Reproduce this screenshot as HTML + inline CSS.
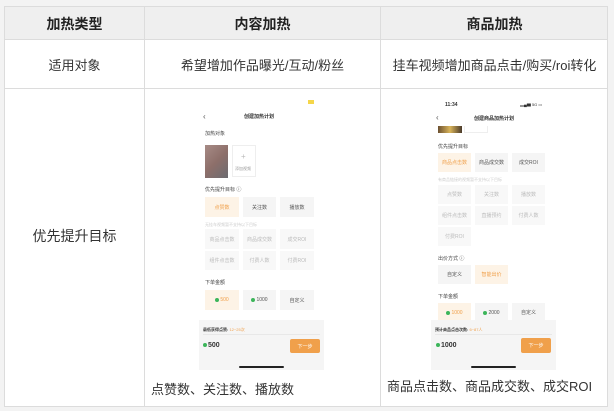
<!DOCTYPE html>
<html><head><meta charset="utf-8"><style>
*{margin:0;padding:0;box-sizing:border-box}
body{width:614px;height:411px;background:#f3f3f3;position:relative;overflow:hidden;font-family:"Liberation Sans","Noto Sans CJK SC",sans-serif;color:#333}
.a{position:absolute}
.t{position:absolute;left:4px;top:6px;width:604px;height:401px;background:#fff;border:1px solid #dcdcdc}
.hl{position:absolute;left:0;right:0;height:1px;background:#dcdcdc}
.vl{position:absolute;top:0;bottom:0;width:1px;background:#dcdcdc}
.c{position:absolute;text-align:center;white-space:nowrap}
.s{font-size:5px;white-space:nowrap;position:absolute;color:#333}
.b{position:absolute;background:#f5f5f5;font-size:5px;color:#555;display:flex;align-items:center;justify-content:center;white-space:nowrap}
.o{background:#fdf3e6;color:#f0a04b}
.f{color:#bbb;background:#f8f8f8}
.g{display:inline-block;width:4px;height:4px;border-radius:50%;background:#3cb55a;margin-right:1px}
</style></head><body>
<div class="t">
 <div class="a" style="left:0;top:0;right:0;height:33px;background:#efefef"></div>
 <div class="hl" style="top:32px"></div>
 <div class="hl" style="top:81px"></div>
 <div class="vl" style="left:139px"></div>
 <div class="vl" style="left:375px"></div>
</div>
<div class="c" style="left:5px;width:139px;top:14px;font-size:14px;font-weight:bold;color:#222">加热类型</div>
<div class="c" style="left:145px;width:235px;top:14px;font-size:14px;font-weight:bold;color:#222">内容加热</div>
<div class="c" style="left:381px;width:227px;top:14px;font-size:14px;font-weight:bold;color:#222">商品加热</div>
<div class="c" style="left:5px;width:139px;top:55px;font-size:13px">适用对象</div>
<div class="c" style="left:145px;width:235px;top:55px;font-size:13px">希望增加作品曝光/互动/粉丝</div>
<div class="c" style="left:381px;width:227px;top:55px;font-size:13px">挂车视频增加商品点击/购买/roi转化</div>
<div class="c" style="left:5px;width:139px;top:226px;font-size:14px">优先提升目标</div>
<div class="a" style="left:151px;top:379px;font-size:13px;white-space:nowrap">点赞数、关注数、播放数</div>
<div class="a" style="left:387px;top:376px;font-size:13px;white-space:nowrap">商品点击数、商品成交数、成交ROI</div>

<!-- left phone -->
<div class="a" style="left:308px;top:100px;width:6px;height:4px;background:#f5d64a;font-size:4px"></div>
<div class="s" style="left:203px;top:112px;font-size:8px;color:#555">‹</div>
<div class="s" style="left:244px;top:113px;font-weight:bold">创建加热计划</div>
<div class="s" style="left:205px;top:130px;color:#444">加热对象</div>
<div class="a" style="left:205px;top:145px;width:23px;height:33px;background:linear-gradient(135deg,#a78b86,#8d6f6a 50%,#6b6b70)"></div>
<div class="a" style="left:232px;top:145px;width:24px;height:32px;border:1px solid #eee"></div>
<div class="s" style="left:241px;top:152px;font-size:8px;color:#bbb">+</div>
<div class="s" style="left:235px;top:166px;font-size:4px;color:#999">添加视频</div>
<div class="s" style="left:205px;top:186px;color:#444">优先提升目标 ⓘ</div>
<div class="b o" style="left:205px;top:197px;width:34px;height:20px">点赞数</div>
<div class="b" style="left:243px;top:197px;width:33px;height:20px">关注数</div>
<div class="b" style="left:280px;top:197px;width:34px;height:20px">播放数</div>
<div class="s" style="left:205px;top:222px;font-size:4px;color:#ccc">无挂车视频暂不支持以下目标</div>
<div class="b f" style="left:205px;top:229px;width:34px;height:20px">商品点击数</div>
<div class="b f" style="left:243px;top:229px;width:33px;height:20px">商品成交数</div>
<div class="b f" style="left:280px;top:229px;width:34px;height:20px">成交ROI</div>
<div class="b f" style="left:205px;top:251px;width:34px;height:19px">组件点击数</div>
<div class="b f" style="left:243px;top:251px;width:33px;height:19px">付费人数</div>
<div class="b f" style="left:280px;top:251px;width:34px;height:19px">付费ROI</div>
<div class="s" style="left:205px;top:279px;color:#444">下单金额</div>
<div class="b o" style="left:205px;top:290px;width:34px;height:20px"><i class="g"></i>500</div>
<div class="b" style="left:243px;top:290px;width:33px;height:20px"><i class="g"></i>1000</div>
<div class="b" style="left:280px;top:290px;width:34px;height:20px">自定义</div>
<div class="a" style="left:199px;top:320px;width:125px;height:50px;background:#f5f5f5"></div>
<div class="s" style="left:203px;top:327px;font-size:4px;font-weight:bold">最低获得点赞: <span style="color:#f0a04b;font-weight:normal">12~25次</span></div>
<div class="a" style="left:203px;top:334px;width:117px;height:1px;background:#e8e8e8"></div>
<div class="s" style="left:203px;top:342px;font-size:7px;font-weight:bold"><i class="g"></i>500</div>
<div class="b" style="left:290px;top:339px;width:30px;height:14px;background:#f0a04b;color:#fff;border-radius:2px">下一步</div>
<div class="a" style="left:239px;top:366px;width:45px;height:2px;background:#222;border-radius:1px"></div>

<!-- right phone -->
<div class="s" style="left:445px;top:102px;font-weight:bold">11:34</div>
<div class="s" style="left:520px;top:102px;font-size:4px">▂▄▆ 5G ▭</div>
<div class="s" style="left:436px;top:113px;font-size:8px;color:#555">‹</div>
<div class="s" style="left:474px;top:115px;font-weight:bold">创建商品加热计划</div>
<div class="a" style="left:438px;top:126px;width:24px;height:7px;background:linear-gradient(90deg,#6b5030,#d9b45a,#4a3a2a)"></div>
<div class="a" style="left:464px;top:126px;width:24px;height:7px;border:1px solid #eee;border-top:0"></div>
<div class="s" style="left:438px;top:143px;color:#444">优先提升目标</div>
<div class="b o" style="left:438px;top:153px;width:33px;height:19px">商品点击数</div>
<div class="b" style="left:475px;top:153px;width:33px;height:19px">商品成交数</div>
<div class="b" style="left:512px;top:153px;width:33px;height:19px">成交ROI</div>
<div class="s" style="left:438px;top:177px;font-size:4px;color:#ccc">有商品链接的视频暂不支持以下目标</div>
<div class="b f" style="left:438px;top:185px;width:33px;height:19px">点赞数</div>
<div class="b f" style="left:475px;top:185px;width:33px;height:19px">关注数</div>
<div class="b f" style="left:512px;top:185px;width:33px;height:19px">播放数</div>
<div class="b f" style="left:438px;top:206px;width:33px;height:19px">组件点击数</div>
<div class="b f" style="left:475px;top:206px;width:33px;height:19px">直播预约</div>
<div class="b f" style="left:512px;top:206px;width:33px;height:19px">付费人数</div>
<div class="b f" style="left:438px;top:227px;width:33px;height:19px">付费ROI</div>
<div class="s" style="left:438px;top:255px;color:#444">出价方式 ⓘ</div>
<div class="b" style="left:438px;top:265px;width:33px;height:19px">自定义</div>
<div class="b o" style="left:475px;top:265px;width:33px;height:19px">智能出价</div>
<div class="s" style="left:438px;top:293px;color:#444">下单金额</div>
<div class="b o" style="left:438px;top:303px;width:33px;height:19px"><i class="g"></i>1000</div>
<div class="b" style="left:475px;top:303px;width:33px;height:19px"><i class="g"></i>2000</div>
<div class="b" style="left:512px;top:303px;width:33px;height:19px">自定义</div>
<div class="a" style="left:431px;top:320px;width:125px;height:50px;background:#f5f5f5"></div>
<div class="s" style="left:435px;top:327px;font-size:4px;font-weight:bold">预计商品点击次数: <span style="color:#f0a04b;font-weight:normal">6~87人</span></div>
<div class="a" style="left:435px;top:334px;width:117px;height:1px;background:#e8e8e8"></div>
<div class="s" style="left:436px;top:342px;font-size:7px;font-weight:bold"><i class="g"></i>1000</div>
<div class="b" style="left:521px;top:338px;width:30px;height:15px;background:#f0a04b;color:#fff;border-radius:2px">下一步</div>
<div class="a" style="left:471px;top:366px;width:45px;height:2px;background:#222;border-radius:1px"></div>
</body></html>
